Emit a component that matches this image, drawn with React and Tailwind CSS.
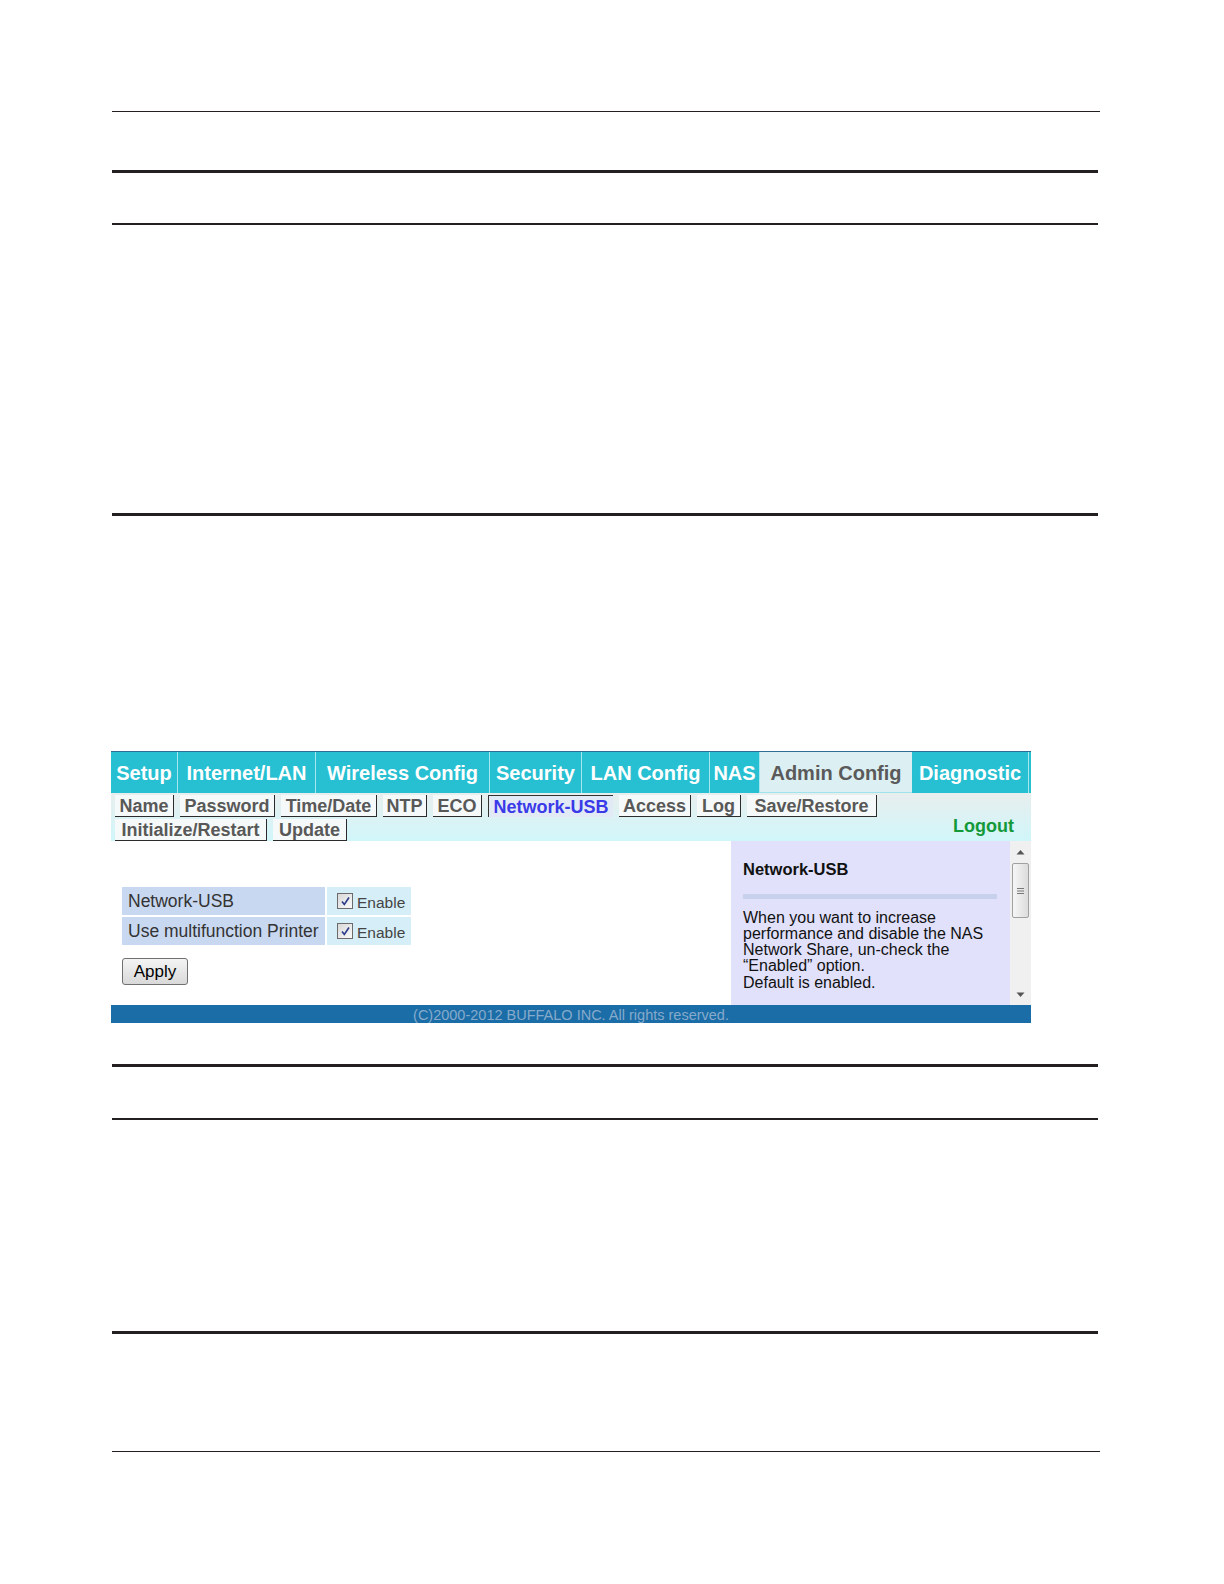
import React from 'react'

const font = { fontFamily: '"Liberation Sans", Arial, sans-serif' }

const TABS = [
  { label: 'Setup', w: 'w-[67px]' },
  { label: 'Internet/LAN', w: 'w-[138px]' },
  { label: 'Wireless Config', w: 'w-[174px]' },
  { label: 'Security', w: 'w-[92px]' },
  { label: 'LAN Config', w: 'w-[128px]' },
  { label: 'NAS', w: 'w-[50px]' },
  { label: 'Admin Config', w: 'w-[152px]', active: true },
  { label: 'Diagnostic', w: 'w-[117px]' },
]

const ROW1 = [
  { label: 'Name', w: 'w-[59px]' },
  { label: 'Password', w: 'w-[95px]' },
  { label: 'Time/Date', w: 'w-[96px]' },
  { label: 'NTP', w: 'w-[44px]' },
  { label: 'ECO', w: 'w-[49px]' },
  { label: 'Network-USB', w: 'w-[125px]', active: true },
  { label: 'Access', w: 'w-[72px]' },
  { label: 'Log', w: 'w-[44px]' },
  { label: 'Save/Restore', w: 'w-[130px]' },
]

const ROW2 = [
  { label: 'Initialize/Restart', w: 'w-[152px]' },
  { label: 'Update', w: 'w-[74px]' },
]

function SubTab({ label, w, active }) {
  if (active) {
    return (
      <div
        className={`${w} h-[22px] flex items-center justify-center border-l border-t border-[#333] bg-[#e2eaf6] text-[18px] font-bold text-[#3a3ae8] leading-none`}
      >
        {label}
      </div>
    )
  }
  return (
    <div
      className={`${w} h-[22px] flex items-center justify-center border-r border-b border-[#2b2b2b] bg-[#f6f9f9] text-[18px] font-bold text-[#585858] leading-none`}
    >
      {label}
    </div>
  )
}

function Checkbox() {
  return (
    <span className="inline-flex w-[16px] h-[16px] border border-[#6b6b6b] bg-gradient-to-br from-[#d8d8d8] to-[#fafafa] items-center justify-center">
      <svg width="11" height="11" viewBox="0 0 11 11">
        <path d="M2 5.5 L4.3 8.5 L9 1.5" fill="none" stroke="#2b3a8a" strokeWidth="1.6" />
      </svg>
    </span>
  )
}

function OptionRow({ label }) {
  return (
    <div className="flex gap-[2px] h-[28px]">
      <div className="w-[203px] bg-[#c9d8f1] flex items-center pl-[6px] text-[17.5px] text-[#333]">
        {label}
      </div>
      <div className="w-[84px] bg-[#d5eef7] flex items-center pl-[10px] gap-[4px] text-[15.5px] text-[#444]">
        <Checkbox />
        <span className="pt-[4px]">Enable</span>
      </div>
    </div>
  )
}

function RouterScreen() {
  return (
    <div className="w-[920px] ml-[-1px]">
      <div className="h-px bg-[#2e6b96]" />
      {/* Main tabs */}
      <div className="flex h-[41px] bg-[#27bfd2]">
        {TABS.map((t) => (
          <div
            key={t.label}
            className={`${t.w} h-full flex items-center justify-center text-[20px] font-bold leading-none ${
              t.active
                ? 'bg-[#dcf0f3] text-[#5a5a5a] border-b border-[#9fe3ec] pt-[2px]'
                : 'text-white border-r border-[#a5e6ef]'
            }`}
          >
            {t.label}
          </div>
        ))}
      </div>
      {/* Sub tabs */}
      <div className="h-[48px] bg-gradient-to-b from-[#e8eeee] to-[#d0f6fa] pl-[4px] pt-[2px] flex">
        <div className="flex flex-col gap-[2px]">
          <div className="flex gap-[6px]">
            {ROW1.map((t) => (
              <SubTab key={t.label} {...t} />
            ))}
          </div>
          <div className="flex gap-[6px]">
            {ROW2.map((t) => (
              <SubTab key={t.label} {...t} />
            ))}
          </div>
        </div>
        <div className="ml-auto pr-[17px] pt-[22px] text-[18px] font-bold text-[#14993a] leading-none">
          Logout
        </div>
      </div>
      {/* Content */}
      <div className="flex h-[164px]">
        <div className="w-[620px] bg-white pl-[11px] pt-[46px]">
          <div className="flex flex-col gap-[2px]">
            <OptionRow label="Network-USB" />
            <OptionRow label="Use multifunction Printer" />
          </div>
          <button className="mt-[13px] w-[66px] h-[27px] rounded-[3px] border border-[#707070] bg-gradient-to-b from-[#f4f4f4] to-[#d9d9d9] text-[17px] text-black leading-none">
            Apply
          </button>
        </div>
        <div className="w-[279px] bg-[#e1e1fb] pl-[12px] pt-[20px]">
          <div className="text-[16.5px] font-bold text-[#111] leading-none">Network-USB</div>
          <div className="mt-[16px] w-[254px] h-[5px] bg-[#c8d1ec]" />
          <div className="mt-[11px] text-[16px] leading-[16.3px] text-[#111]">
            When you want to increase
            <br />
            performance and disable the NAS
            <br />
            Network Share, un-check the
            <br />
            “Enabled” option.
            <br />
            Default is enabled.
          </div>
        </div>
        <div className="w-[21px] bg-[#f0f0f0] flex flex-col items-center">
          <svg width="9" height="6" viewBox="0 0 9 6" className="mt-[8px]">
            <path d="M0.5 5.5 L4.5 1 L8.5 5.5 Z" fill="#555" />
          </svg>
          <div className="mt-[8px] w-[17px] h-[55px] rounded-[2px] border border-[#a0a0a0] bg-gradient-to-r from-[#f6f6f6] to-[#dcdcdc] flex items-center justify-center">
            <svg width="7" height="8" viewBox="0 0 7 8">
              <path d="M0 1.5 H7 M0 4 H7 M0 6.5 H7" stroke="#777" strokeWidth="1" />
            </svg>
          </div>
          <svg width="9" height="6" viewBox="0 0 9 6" className="mt-auto mb-[7px]">
            <path d="M0.5 0.5 L4.5 5 L8.5 0.5 Z" fill="#555" />
          </svg>
        </div>
      </div>
      {/* Footer */}
      <div className="h-[18px] bg-[#1b6da7] overflow-hidden text-center text-[14.5px] leading-none pt-[3px] text-[#86aacb]">
        (C)2000-2012 BUFFALO INC. All rights reserved.
      </div>
    </div>
  )
}

export default function App() {
  return (
    <div className="w-[1224px] h-[1584px] bg-white" style={font}>
      <div className="pt-[111px] pl-[112px]">
        <div className="w-[988px] h-px bg-[#231f20]" />
        <div className="h-[58px]" />
        <div className="w-[986px] h-[3px] bg-[#231f20]" />
        <div className="h-[50px]" />
        <div className="w-[986px] h-[2px] bg-[#231f20]" />
        <div className="h-[288px]" />
        <div className="w-[986px] h-[3px] bg-[#231f20]" />
        <div className="h-[235px]" />
        <RouterScreen />
        <div className="h-[41px]" />
        <div className="w-[986px] h-[3px] bg-[#231f20]" />
        <div className="h-[51px]" />
        <div className="w-[986px] h-[2px] bg-[#231f20]" />
        <div className="h-[211px]" />
        <div className="w-[986px] h-[3px] bg-[#231f20]" />
        <div className="h-[117px]" />
        <div className="w-[988px] h-px bg-[#231f20]" />
      </div>
    </div>
  )
}
